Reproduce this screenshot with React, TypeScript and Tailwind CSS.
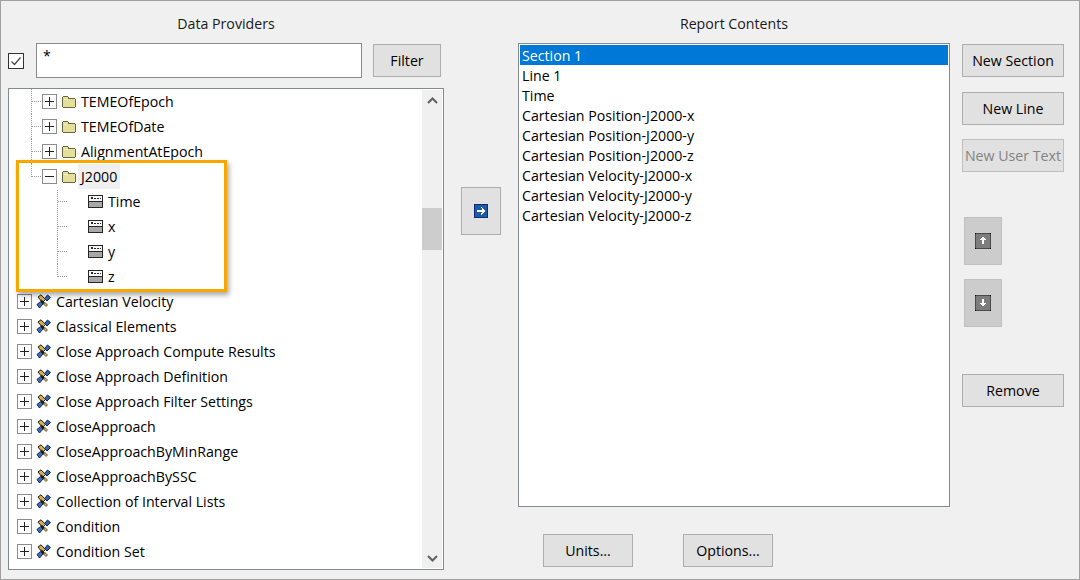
import type { ReactNode } from "react"

const font = "font-['Open_Sans','Noto_Sans',sans-serif] text-[14.2px]"

const reportLines = [
  "Section 1",
  "Line 1",
  "Time",
  "Cartesian Position-J2000-x",
  "Cartesian Position-J2000-y",
  "Cartesian Position-J2000-z",
  "Cartesian Velocity-J2000-x",
  "Cartesian Velocity-J2000-y",
  "Cartesian Velocity-J2000-z",
]

const topItems = [
  "Cartesian Velocity",
  "Classical Elements",
  "Close Approach Compute Results",
  "Close Approach Definition",
  "Close Approach Filter Settings",
  "CloseApproach",
  "CloseApproachByMinRange",
  "CloseApproachBySSC",
  "Collection of Interval Lists",
  "Condition",
  "Condition Set",
]

function Expander({ open }: { open?: boolean }) {
  return (
    <span className="flex h-[15px] w-[15px] shrink-0 items-center justify-center border border-[#8c8c8c] bg-white">
      <svg width="9" height="9" viewBox="0 0 9 9" shapeRendering="crispEdges">
        <path d="M0 4h9v1H0z" fill="#222" />
        {!open && <path d="M4 0h1v9H4z" fill="#222" />}
      </svg>
    </span>
  )
}

function Folder() {
  return (
    <svg width="14" height="12" viewBox="0 0 14 12" shapeRendering="crispEdges" className="shrink-0">
      <path d="M0 1h1V0h5v1h1v1h6v1h1v8h-1v1H1v-1H0z" fill="#6b673a" />
      <path d="M1 1h5v2h7v8H1z" fill="#e4e09c" />
      <path d="M2 3h4v1H2z" fill="#f3f1c8" />
    </svg>
  )
}

function Satellite() {
  return (
    <svg width="15" height="15" viewBox="0 0 15 15" className="shrink-0">
      <path d="M2 3 5 0.8 9.5 5.5 6.5 8.5Z" fill="#d9b04a" stroke="#1a1a1a" strokeWidth="1" />
      <path d="M8.5 4.5 11.5 1 14.5 3.5 11 7Z" fill="#2f62b0" stroke="#14264f" strokeWidth="1" />
      <path d="M1 10.5 4.5 7.5 7 10 3.5 14Z" fill="#3a6cb8" stroke="#14264f" strokeWidth="1" />
      <path d="M5.5 5.5 9 9 7.5 10.5 4.5 7Z" fill="#1c1c1c" />
      <path d="M9 8.5 11.5 11 10 12.5 7.5 10Z" fill="#d9b04a" stroke="#3a3420" strokeWidth="0.7" />
    </svg>
  )
}

function DataItem() {
  return (
    <svg width="15" height="13" viewBox="0 0 15 13" shapeRendering="crispEdges" className="shrink-0">
      <path d="M0 0h15v13H0z" fill="#262626" />
      <path d="M1 1h13v5H1z" fill="#f6f6f6" />
      <path d="M1 7h13v5H1z" fill="#a8a8a8" />
      <path d="M3 2h2v2H3zM6 3h2v1H6zM9 3h2v1H9zM12 3h1v1h-1z" fill="#262626" />
    </svg>
  )
}

// dotted connectors in front of a tree row
function Connector({ kind }: { kind: "parent" | "parentLast" | "child" | "childLast" | "childFirst" }) {
  if (kind === "parent" || kind === "parentLast") {
    return (
      <svg width="33" height="25" viewBox="0 0 33 25" className="shrink-0" shapeRendering="crispEdges">
        <path
          d={kind === "parent" ? "M22.5 0V25M23 12.5H33" : "M22.5 0V12.5M23 12.5H33"}
          stroke="#9a9a9a"
          strokeDasharray="1 1"
          fill="none"
        />
      </svg>
    )
  }
  const d =
    kind === "childFirst" ? "M48.5 1V25M49 12.5H58" : kind === "childLast" ? "M48.5 0V12.5M49 12.5H58" : "M48.5 0V25M49 12.5H58"
  return (
    <svg width="79" height="25" viewBox="0 0 79 25" className="shrink-0" shapeRendering="crispEdges">
      <path d={d} stroke="#9a9a9a" strokeDasharray="1 1" fill="none" />
    </svg>
  )
}

function Row({ children }: { children: ReactNode }) {
  return <div className="flex h-[25px] items-center whitespace-nowrap text-black">{children}</div>
}

function FolderRow({ label, open, last, active }: { label: string; open?: boolean; last?: boolean; active?: boolean }) {
  return (
    <Row>
      <Connector kind={last ? "parentLast" : "parent"} />
      <Expander open={open} />
      <span className="ml-[5px]">
        <Folder />
      </span>
      <span className={`ml-[2px] flex h-[25px] items-center px-[3px] ${active ? "bg-[#f0f0f0]" : ""}`}>{label}</span>
    </Row>
  )
}

function LeafRow({ label, kind }: { label: string; kind: "child" | "childLast" | "childFirst" }) {
  return (
    <Row>
      <Connector kind={kind} />
      <DataItem />
      <span className="ml-[5px]">{label}</span>
    </Row>
  )
}

function TopRow({ label }: { label: string }) {
  return (
    <Row>
      <span className="ml-[8px]">
        <Expander />
      </span>
      <span className="ml-[4px]">
        <Satellite />
      </span>
      <span className="ml-[5px]">{label}</span>
    </Row>
  )
}

function Btn({ children, className = "" }: { children: ReactNode; className?: string }) {
  return (
    <div className={`flex items-center justify-center border border-[#adadad] bg-[#e1e1e1] text-black ${className}`}>
      {children}
    </div>
  )
}

function ArrowTile({ down }: { down?: boolean }) {
  return (
    <div className="flex h-[48px] w-[38px] items-center justify-center border border-[#c0c0c0] bg-[#cccccc]">
      <svg width="16" height="16" viewBox="0 0 16 16" shapeRendering="crispEdges">
        <path d="M1 0h14v1H1zM1 15h14v1H1zM0 1h1v14H0zM15 1h1v14h-1z" fill="#4a4a4a" />
        <path d="M0 0h1v1H0zM15 0h1v1h-1zM0 15h1v1H0zM15 15h1v1h-1z" fill="#000" />
        <path d="M1 1h14v14H1z" fill="#7d7d7d" />
        {down ? (
          <path d="M7 4h2v4h2v1h-1v1H9v1H7v-1H6V9H5V8h2z" fill="#fff" />
        ) : (
          <path d="M7 4h2v1h1v1h1v1H9v4H7V7H5V6h1V5h1z" fill="#fff" />
        )}
      </svg>
    </div>
  )
}

export default function App() {
  return (
    <div className={`flex h-[580px] w-[1080px] overflow-hidden border border-[#a0a0a0] bg-[#f0f0f0] ${font}`}>
      {/* data providers */}
      <div className="ml-[7px] w-[436px] shrink-0">
        <div className="mt-[13px] h-[20px] text-center leading-[20px] text-[#1a1a1a]">Data Providers</div>
        <div className="mt-[9px] flex h-[35px] items-center">
          <div className="flex h-[16px] w-[16px] items-center justify-center border border-[#333] bg-white">
            <svg width="12" height="12" viewBox="0 0 12 12" fill="none">
              <path d="M1.5 6.5 4.5 9.5 10.5 2.5" stroke="#444" strokeWidth="1.2" />
            </svg>
          </div>
          <div className="ml-[12px] h-[35px] w-[326px] border border-[#8a8a8a] bg-white px-[6px] pt-[2px] leading-[20px] text-black">*</div>
          <Btn className="ml-[11px] h-[33px] w-[68px]">Filter</Btn>
        </div>
        <div className="relative mt-[10px] flex h-[482px] border border-[#858990] bg-white">
          <div className="h-full min-w-0 flex-1 overflow-hidden">
            <FolderRow label="TEMEOfEpoch" />
            <FolderRow label="TEMEOfDate" />
            <FolderRow label="AlignmentAtEpoch" />
            <FolderRow label="J2000" open last active />
            <LeafRow label="Time" kind="childFirst" />
            <LeafRow label="x" kind="child" />
            <LeafRow label="y" kind="child" />
            <LeafRow label="z" kind="childLast" />
            {topItems.map((t) => (
              <TopRow key={t} label={t} />
            ))}
          </div>
          <div className="my-[1px] mr-[1px] flex w-[20px] flex-col bg-[#f0f0f0]">
            <div className="flex h-[20px] items-center justify-center">
              <svg width="11" height="7" viewBox="0 0 11 7" fill="none">
                <path d="M1 6 5.5 1.5 10 6" stroke="#606060" strokeWidth="2" />
              </svg>
            </div>
            <div className="mt-[98px] h-[42px] bg-[#cdcdcd]" />
            <div className="mt-auto flex h-[20px] items-center justify-center">
              <svg width="11" height="7" viewBox="0 0 11 7" fill="none">
                <path d="M1 1 5.5 5.5 10 1" stroke="#606060" strokeWidth="2" />
              </svg>
            </div>
          </div>
          {/* callout over the expanded node */}
          <div className="absolute left-[7px] top-[71px] h-[132px] w-[211px] border-[3px] border-[#f7a800] shadow-[2px_3px_5px_rgba(0,0,0,0.35)]" />
        </div>
      </div>

      {/* add button */}
      <div className="w-[74px] shrink-0 pl-[17px] pt-[186px]">
        <Btn className="h-[48px] w-[40px] border-[#a8a8a8]">
          <svg width="14" height="14" viewBox="0 0 14 14" shapeRendering="crispEdges">
            <path d="M0 0h14v14H0z" fill="#0c2a78" />
            <path d="M1 1h12v12H1z" fill="#1d5aa8" />
            <path d="M7 3h1v1h1v1h1v1h1v2h-1v1H9v1H8v1H7V9h1V8H3V6h5V4H7z" fill="#fff" />
          </svg>
        </Btn>
      </div>

      {/* report contents */}
      <div className="w-[432px] shrink-0">
        <div className="mt-[13px] h-[20px] text-center leading-[20px] text-[#1a1a1a]">Report Contents</div>
        <div className="mt-[9px] h-[464px] border border-[#858990] bg-white p-[1px]">
          {reportLines.map((line, i) => (
            <div
              key={line}
              className={`h-[20px] pl-[2px] leading-[22px] ${i === 0 ? "bg-[#0078d7] text-white" : "text-black"}`}
            >
              {line}
            </div>
          ))}
        </div>
        <div className="mt-[27px] flex gap-[50px] pl-[25px]">
          <Btn className="h-[33px] w-[90px]">Units...</Btn>
          <Btn className="h-[33px] w-[90px]">Options...</Btn>
        </div>
      </div>

      {/* section buttons */}
      <div className="ml-[12px] flex w-[102px] shrink-0 flex-col pt-[43px]">
        <Btn className="h-[33px] w-[102px]">New Section</Btn>
        <Btn className="mt-[15px] h-[33px] w-[102px]">New Line</Btn>
        <Btn className="mt-[14px] h-[33px] w-[102px] border-[#bfbfbf] bg-[#cccccc] !text-[#838383]">New User Text</Btn>
        <div className="ml-[2px] mt-[45px]">
          <ArrowTile />
        </div>
        <div className="ml-[2px] mt-[14px]">
          <ArrowTile down />
        </div>
        <Btn className="mt-[47px] h-[33px] w-[102px]">Remove</Btn>
      </div>
    </div>
  )
}
